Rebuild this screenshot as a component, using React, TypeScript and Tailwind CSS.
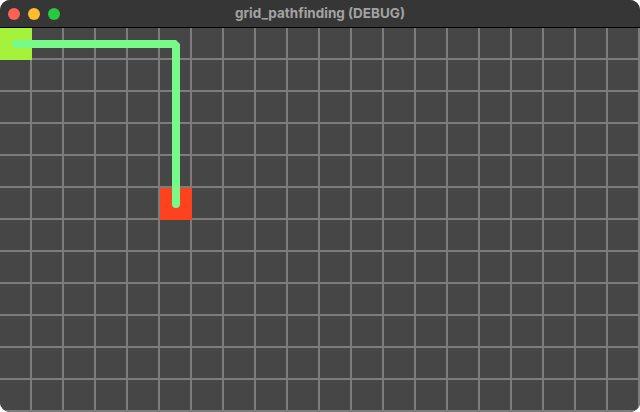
const COLS = 20;
const ROWS = 12;

const start = { r: 0, c: 0 };
const goal = { r: 5, c: 5 };

function Cell({ r, c }: { r: number; c: number }) {
  if (r === start.r && c === start.c) {
    return <div className="h-8 w-8 bg-[#a4f23a]" />;
  }
  if (r === goal.r && c === goal.c) {
    return <div className="h-8 w-8 bg-[#fd4220]" />;
  }
  return <div className="h-8 w-8 border-r-2 border-b-2 border-[#7c7c7c] bg-[#464646]" />;
}

export default function App() {
  const cells = [];
  for (let r = 0; r < ROWS; r++) {
    for (let c = 0; c < COLS; c++) {
      cells.push(<Cell key={`${r}-${c}`} r={r} c={c} />);
    }
  }

  return (
    <div className="h-[412px] w-[640px] bg-white">
      <div className="flex h-full w-full flex-col overflow-hidden rounded-[10px] bg-[#464646]">
        {/* title bar */}
        <div className="relative flex h-7 shrink-0 items-center border-b border-black bg-[#363636] px-2">
          <div className="flex gap-2">
            <span className="h-3 w-3 rounded-full bg-[#fe5f57]" />
            <span className="h-3 w-3 rounded-full bg-[#febc2e]" />
            <span className="h-3 w-3 rounded-full bg-[#28c840]" />
          </div>
          <div className="absolute inset-0 flex items-center justify-center font-['Inter',sans-serif] text-[13.5px] font-bold text-[#a3a3a3]">
            grid_pathfinding (DEBUG)
          </div>
        </div>

        {/* grid canvas */}
        <div className="relative">
          <div className="grid grid-cols-[repeat(20,32px)]">{cells}</div>
          <svg className="absolute left-0 top-0" width={640} height={384}>
            <polyline
              points="16,16 176,16 176,176"
              fill="none"
              stroke="#78fa8a"
              strokeWidth={8}
              strokeLinecap="round"
              strokeLinejoin="bevel"
            />
          </svg>
        </div>
      </div>
    </div>
  );
}
